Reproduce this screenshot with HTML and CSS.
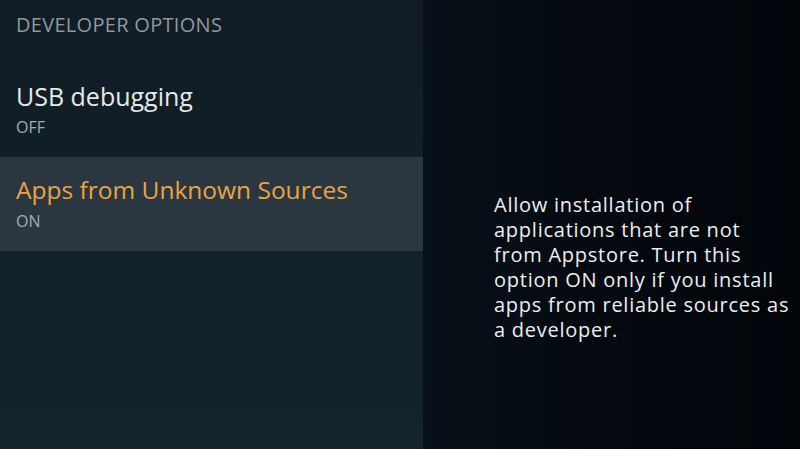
FILE: index.html
```html
<!DOCTYPE html>
<html lang="en">
<head>
<meta charset="utf-8">
<title>Developer Options</title>
<link rel="stylesheet" href="styles.css">
</head>
<body>
<div class="screen">
  <div class="menu">
    <div class="menu-title">DEVELOPER OPTIONS</div>
    <div class="item">
      <div class="item-name">USB debugging</div>
      <div class="item-value">OFF</div>
    </div>
    <div class="item selected">
      <div class="item-name">Apps from Unknown Sources</div>
      <div class="item-value">ON</div>
    </div>
  </div>
  <div class="detail">
    <p class="detail-text">Allow installation of<br>applications that are not<br>from Appstore. Turn this<br>option ON only if you install<br>apps from reliable sources as<br>a developer.</p>
  </div>
</div>
</body>
</html>
```

FILE: styles.css
```css
html, body {
  margin: 0;
  padding: 0;
  background: #03080d;
}
.screen {
  display: flex;
  width: 800px;
  height: 449px;
  overflow: hidden;
  font-family: "Open Sans", "Noto Sans", sans-serif;
}
.menu {
  width: 423px;
  flex: none;
  background: linear-gradient(180deg, #111c24 0%, #13212a 60%, #14242a 100%);
}
.menu-title {
  padding: 12px 16px 0;
  height: 51px;
  font-size: 20px;
  line-height: 26px;
  letter-spacing: 0.3px;
  color: #8e999f;
}
.item {
  padding: 17px 16px 20px;
  display: flex;
  flex-direction: column;
  gap: 5px;
}
.item.selected {
  background: #2b3740;
}
.item-name {
  font-size: 25px;
  line-height: 32px;
  color: #e6e9eb;
}
.selected .item-name {
  font-size: 24.5px;
  color: #e9a441;
}
.item-value {
  font-size: 16px;
  line-height: 20px;
  color: #a3adb3;
}
.detail {
  flex: 1;
  background: linear-gradient(90deg, #08111a 0%, #040a10 40%, #01050a 100%);
  padding: 192px 0 0 71px;
}
.detail-text {
  margin: 0;
  white-space: nowrap;
  font-size: 20px;
  line-height: 25px;
  letter-spacing: 0.75px;
  color: #eceeef;
}
```
